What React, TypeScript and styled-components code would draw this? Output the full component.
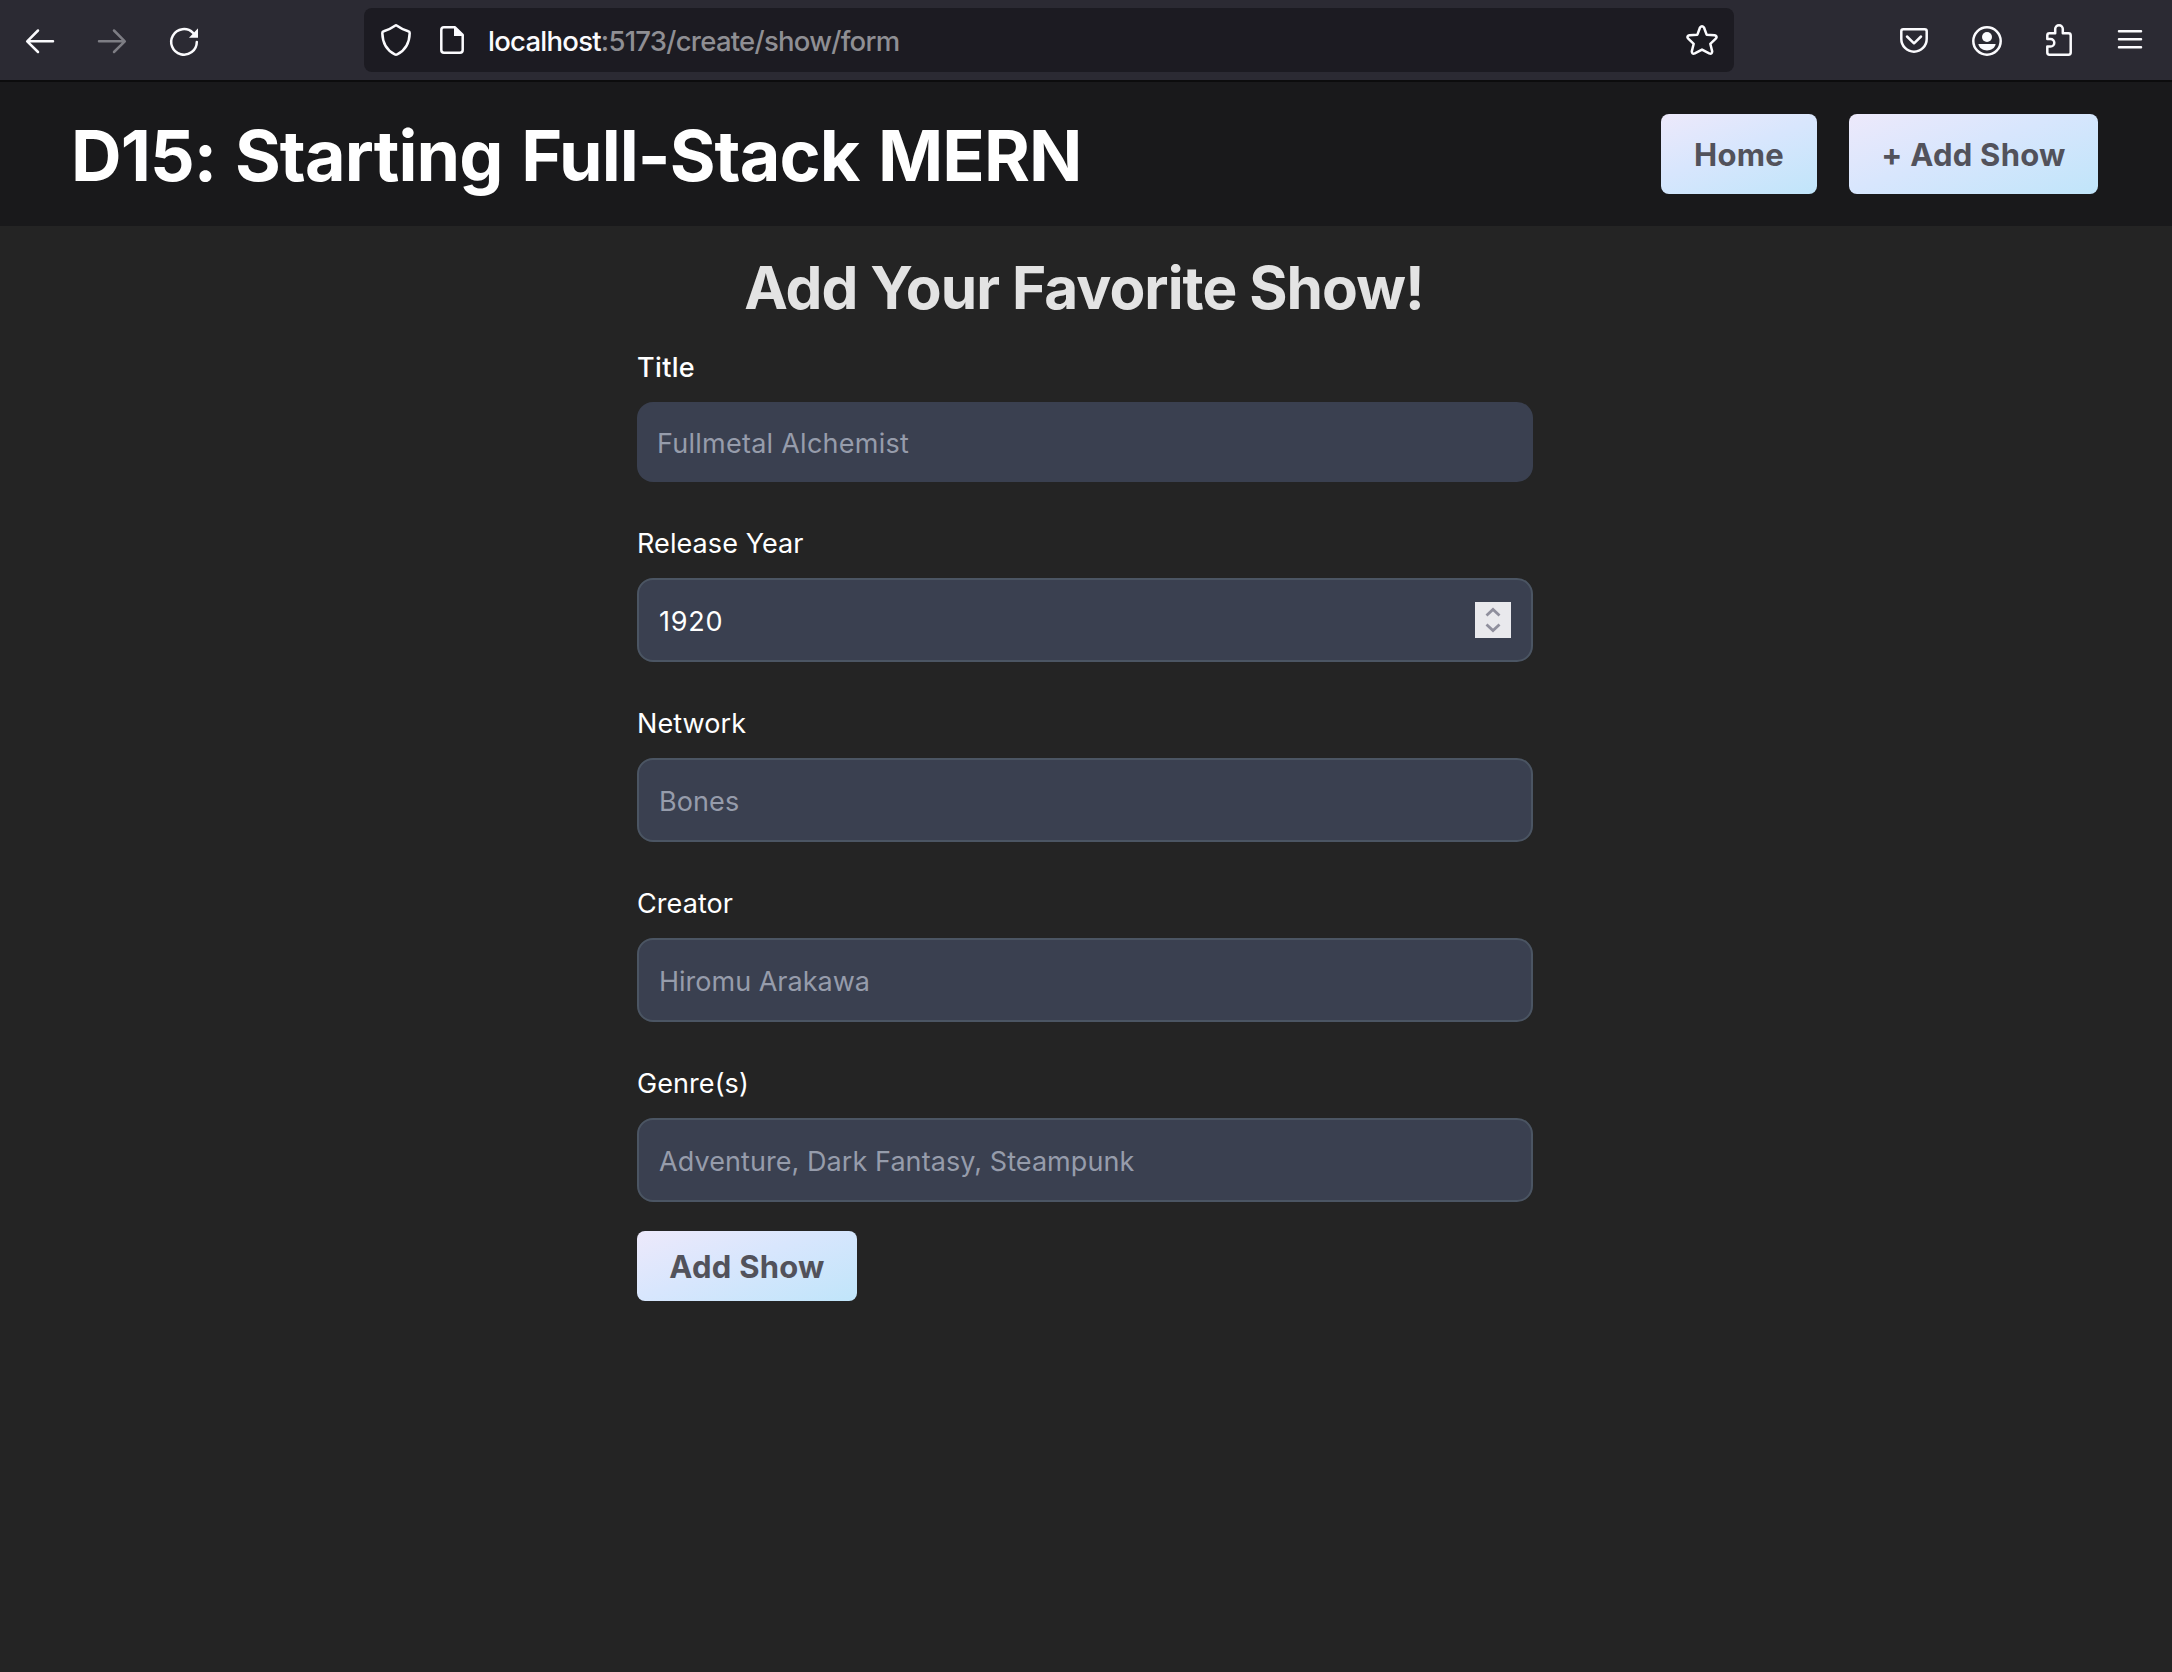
import React from "react";
import styled, { createGlobalStyle } from "styled-components";

const GlobalStyle = createGlobalStyle`
  * { box-sizing: border-box; }
  html, body { margin: 0; background: #242424; }
  body {
    font-family: Inter, "Liberation Sans", sans-serif;
    color: #fff;
  }
`;

const Page = styled.div`
  width: 2172px;
  min-height: 1672px;
  background: #242424;
`;

const Toolbar = styled.div`
  height: 82px;
  padding: 8px 26px 8px 24px;
  display: flex;
  align-items: center;
  background: #2b2a33;
  border-bottom: 2px solid #0c0c0d;
`;

const IconGroup = styled.div<{ $gap: number }>`
  display: flex;
  align-items: center;
  gap: ${(p) => p.$gap}px;
`;

const Icon = styled.svg<{ $dim?: boolean }>`
  display: block;
  flex: none;
  width: 32px;
  height: 32px;
  overflow: visible;
  fill: none;
  stroke: currentColor;
  stroke-width: 2.5;
  stroke-linecap: round;
  stroke-linejoin: round;
  color: #fbfbfe;
  opacity: ${(p) => (p.$dim ? 0.4 : 1)};
`;

const AddressBar = styled.div`
  width: 1370px;
  height: 64px;
  margin: 0 164px 0 164px;
  padding: 0 16px;
  display: flex;
  align-items: center;
  border-radius: 8px;
  background: #1c1b22;
`;

const Url = styled.div`
  flex: 1;
  margin-left: 20px;
  padding-top: 2px;
  font-size: 27.5px;
  font-weight: 500;
  line-height: 40px;
  letter-spacing: -0.75px;
  color: #fbfbfe;
`;

const UrlPath = styled.span`
  color: #8f8f94;
`;

const Header = styled.header`
  height: 144px;
  padding: 0 74px 0 71px;
  display: flex;
  align-items: center;
  justify-content: space-between;
  background: #19191b;
`;

const Brand = styled.h1`
  margin: 0;
  padding-top: 3px;
  font-size: 70px;
  font-weight: 700;
  line-height: 80px;
  letter-spacing: -0.9px;
  word-spacing: 3px;
  white-space: nowrap;
`;

const Nav = styled.nav`
  display: flex;
  gap: 32px;
`;

const Button = styled.button<{ $width: number; $height: number }>`
  width: ${(p) => p.$width}px;
  height: ${(p) => p.$height}px;
  padding: 1px 0 0;
  border: 0;
  border-radius: 8px;
  background: linear-gradient(160deg, #ede9fb 0%, #d8e6fd 45%, #c0e5fa 100%);
  color: #52525b;
  font-family: inherit;
  font-size: 31px;
  font-weight: 700;
  line-height: 40px;
  letter-spacing: 0.25px;
  white-space: nowrap;
`;

const Form = styled.form`
  width: 896px;
  margin: 0 0 0 637px;
  padding-top: 26px;
`;

const FormTitle = styled.h2`
  margin: 0 2px 1px 0;
  font-size: 58.5px;
  font-weight: 700;
  line-height: 72px;
  letter-spacing: -0.95px;
  text-align: center;
  white-space: nowrap;
  color: #e3e3e3;
`;

const Field = styled.div`
  margin-bottom: 19px;
  &:last-of-type { margin-bottom: 29px; }
`;

const Label = styled.label<{ $strong?: boolean }>`
  display: block;
  padding: 22px 0 0;
  height: 77px;
  font-size: 27px;
  font-weight: ${(p) => (p.$strong ? 500 : 400)};
  line-height: 42px;
  letter-spacing: ${(p) => (p.$strong ? 0.35 : 0.08)}px;
`;

const InputBox = styled.div<{ $bare?: boolean }>`
  height: ${(p) => (p.$bare ? 80 : 84)}px;
  padding: 0 20px;
  display: flex;
  align-items: center;
  border: ${(p) => (p.$bare ? "0" : "2px solid #4b5563")};
  border-radius: 16px;
  background: #3a4050;
`;

const Input = styled.input<{ $tracking: number }>`
  flex: 1;
  min-width: 0;
  padding: 3px 0 0;
  border: 0;
  outline: 0;
  background: transparent;
  color: #fff;
  font-family: inherit;
  font-size: 27px;
  line-height: 40px;
  letter-spacing: ${(p) => p.$tracking}px;
  &::placeholder { color: #969cab; opacity: 1; }
`;

const Stepper = styled.span`
  width: 36px;
  height: 36px;
  display: flex;
  align-items: center;
  justify-content: center;
  background: #e9e9ed;
`;

const StepperArrows = styled.svg`
  width: 36px;
  height: 36px;
  fill: none;
  stroke: #8f8f9d;
  stroke-width: 2.8;
`;

const fields = [
  { label: "Title", placeholder: "Fullmetal Alchemist", focused: true, tracking: 0.25 },
  { label: "Release Year", value: "1920", stepper: true, tracking: 0.8 },
  { label: "Network", placeholder: "Bones", tracking: 0.1 },
  { label: "Creator", placeholder: "Hiromu Arakawa", tracking: 0 },
  { label: "Genre(s)", placeholder: "Adventure, Dark Fantasy, Steampunk", tracking: 0.07 },
];

export default function App() {
  return (
    <Page>
      <GlobalStyle />
      <Toolbar>
        <IconGroup $gap={40}>
          <Icon viewBox="0 0 32 32"><path d="M29 17.3H3.5M14 6.5L3.2 17.3L14 28" /></Icon>
          <Icon viewBox="0 0 32 32" $dim><path d="M3 17.3H28.5M18 6.5L28.8 17.3L18 28" /></Icon>
          <Icon viewBox="0 0 32 32">
            <path d="M28.8 18A12.8 12.8 0 1 1 25 8.8" />
            <path d="M30 4.5V13.8H21L29.6 4.8Z" fill="currentColor" stroke="none" />
          </Icon>
        </IconGroup>
        <AddressBar>
          <IconGroup $gap={24}>
            <Icon viewBox="0 0 32 32"><path d="M15 1.7Q16 1 17 1.7C20.5 4.3 24.5 6 28.3 7.2Q29.7 7.6 29.7 9C29.5 17 27 25.5 17.2 30.4Q16 31 14.8 30.4C5 25.5 2.5 17 2.3 9Q2.3 7.6 3.7 7.2C7.5 6 11.5 4.3 15 1.7Z" /></Icon>
            <Icon viewBox="0 0 32 32">
              <path d="M19 3.3H8Q5.3 3.3 5.3 6V26Q5.3 28.7 8 28.7H24Q26.7 28.7 26.7 26V11Z" />
              <path d="M18 2.5L28 12H18Z" fill="currentColor" stroke="none" />
            </Icon>
          </IconGroup>
          <Url>localhost<UrlPath>:5173/create/show/form</UrlPath></Url>
          <Icon viewBox="0 0 32 32"><path d="M14 3.5Q16 .9 18 3.5L20.6 10.7L28.6 11.2Q31.7 12.2 30 14.4L24.3 19.8L26.2 27.4Q26 30.5 23.2 29.4L16 25.6L8.8 29.4Q6 30.5 5.8 27.4L7.7 19.8L2 14.4Q.3 12.2 3.4 11.2L11.4 10.7Z" /></Icon>
        </AddressBar>
        <IconGroup $gap={40}>
          <Icon viewBox="0 0 32 32">
            <path d="M5.3 5.3H26.7Q28.7 5.3 28.7 7.3V15A12.7 12.7 0 0 1 3.3 15V7.3Q3.3 5.3 5.3 5.3Z" />
            <path d="M9 12.5L16 19.3L23 12.5" />
          </Icon>
          <Icon viewBox="0 0 32 32">
            <circle cx="17" cy="17" r="13.7" />
            <circle cx="17" cy="13" r="5" fill="currentColor" stroke="none" />
            <path d="M8.3 20H25.7C24 28.5 10 28.5 8.3 20Z" fill="currentColor" stroke="none" />
          </Icon>
          <Icon viewBox="0 0 32 32">
            <path d="M5.3 14.9V11.5Q5.3 9.3 7.5 9.3H13.2V5A3.8 3.8 0 0 1 20.8 5V9.3H26.5Q28.7 9.3 28.7 11.5V28.5Q28.7 30.7 26.5 30.7H7.5Q5.3 30.7 5.3 28.5V22.5H8.5A3.8 3.8 0 0 0 8.5 14.9Z" />
          </Icon>
          <Icon viewBox="0 0 32 32"><path d="M5 7.3H27M5 15.3H27M5 23.3H27" /></Icon>
        </IconGroup>
      </Toolbar>
      <Header>
        <Brand>D15: Starting Full-Stack MERN</Brand>
        <Nav>
          <Button type="button" $width={156} $height={80}>Home</Button>
          <Button type="button" $width={249} $height={80}>+ Add Show</Button>
        </Nav>
      </Header>
      <Form>
        <FormTitle>Add Your Favorite Show!</FormTitle>
        {fields.map((f) => (
          <Field key={f.label}>
            <Label $strong={f.focused}>{f.label}</Label>
            <InputBox $bare={f.focused}>
              <Input placeholder={f.placeholder} defaultValue={f.value} $tracking={f.tracking} />
              {f.stepper && (
                <Stepper>
                  <StepperArrows viewBox="0 0 36 36">
                    <path d="M11.5 13.5L18 7.5L24.5 13.5M11.5 22.5L18 28.5L24.5 22.5" />
                  </StepperArrows>
                </Stepper>
              )}
            </InputBox>
          </Field>
        ))}
        <Button type="button" $width={220} $height={70}>Add Show</Button>
      </Form>
    </Page>
  );
}
